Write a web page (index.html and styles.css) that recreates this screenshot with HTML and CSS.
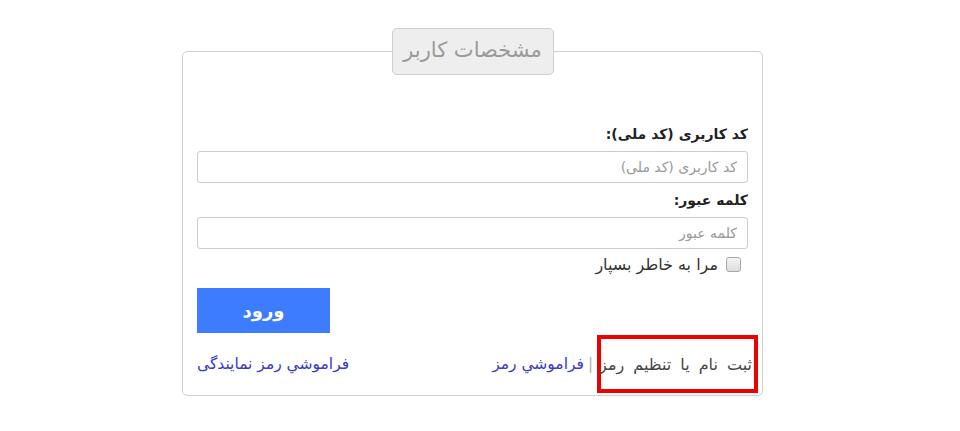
FILE: index.html
```html
<!DOCTYPE html>
<html lang="fa" dir="rtl">
<head>
<meta charset="utf-8">
<title>مشخصات کاربر</title>
<link rel="stylesheet" href="styles.css">
</head>
<body>
<div class="page">
  <fieldset class="panel">
    <legend class="legend">مشخصات کاربر</legend>
    <form class="form">
      <label class="label" for="user">کد کاربری (کد ملی):</label>
      <input class="input" id="user" type="text" placeholder="کد کاربری (کد ملی)">
      <label class="label" for="pass">کلمه عبور:</label>
      <input class="input" id="pass" type="password" placeholder="کلمه عبور">
      <div class="remember">
        <span class="check"></span>
        <span class="remember-text">مرا به خاطر بسپار</span>
      </div>
      <div class="actions">
        <button class="btn" type="button">ورود</button>
      </div>
      <div class="links">
        <div class="links-right">
          <span class="register">ثبت نام یا تنظیم رمز</span>
          <span class="sep">|</span>
          <a class="link" href="#">فراموشي رمز</a>
        </div>
        <a class="link" href="#">فراموشي رمز نمايندگی</a>
      </div>
    </form>
  </fieldset>
</div>
</body>
</html>
```
FILE: styles.css
```css
* { box-sizing: border-box; }
html, body { margin: 0; padding: 0; background: #fff; }
body {
  font-family: "DejaVu Sans", "Noto Sans", sans-serif;
  color: #333;
  direction: rtl;
}
.page {
  width: 960px;
  height: 431px;
  padding-top: 28px;
  padding-left: 182px;
  direction: ltr;
}
.panel {
  direction: rtl;
  width: 581px;
  height: 368px;
  margin: 0;
  border: 1px solid #d0d0d0;
  border-radius: 5px;
  padding: 0 14px;
}
.legend {
  margin: 0 auto;
  width: 162px;
  height: 47px;
  border: 1px solid #cfcfcf;
  border-radius: 5px;
  background: #eeeeee;
  color: #9a9a9a;
  font-size: 21px;
  text-align: center;
  line-height: 43px;
  padding: 0;
}
.form {
  display: flex;
  flex-direction: column;
  padding-top: 48px;
}
.label {
  font-weight: bold;
  font-size: 14px;
  color: #222;
  height: 22px;
  line-height: 22px;
  margin-bottom: 6px;
}
.input {
  height: 32px;
  border: 1px solid #cccccc;
  border-radius: 3px;
  padding: 0 10px;
  font-family: inherit;
  font-size: 14px;
  color: #555;
  margin-bottom: 6px;
}
.input::placeholder { color: #999; }
.remember {
  display: flex;
  align-items: center;
  gap: 8px;
  height: 22px;
  margin-top: -2px;
  margin-right: 7px;
}
.check {
  width: 15px;
  height: 15px;
  border: 1px solid #a8a8a8;
  border-radius: 3px;
  background: linear-gradient(#f4f4f4, #dcdcdc);
}
.remember-text { font-size: 16px; color: #333; }
.actions {
  display: flex;
  justify-content: flex-end;
  margin-top: 13px;
}
.btn {
  width: 133px;
  height: 45px;
  border: none;
  background: #3d7bff;
  color: #fff;
  font-family: inherit;
  font-weight: bold;
  font-size: 18px;
  cursor: pointer;
}
.links {
  display: flex;
  justify-content: space-between;
  align-items: center;
  margin-top: 2px;
  margin-right: -10px;
  height: 58px;
}
.links-right {
  display: flex;
  align-items: center;
  gap: 4px;
}
.register {
  width: 161px;
  height: 58px;
  border: 4px solid #ee0000;
  display: flex;
  align-items: center;
  padding-right: 2px;
  font-size: 16px;
  word-spacing: 4px;
  white-space: nowrap;
  color: #444;
}
.sep { color: #b0b0b0; font-size: 15px; }
.link {
  color: #3838c8;
  font-size: 15.5px;
  text-decoration: none;
  white-space: nowrap;
}
```
